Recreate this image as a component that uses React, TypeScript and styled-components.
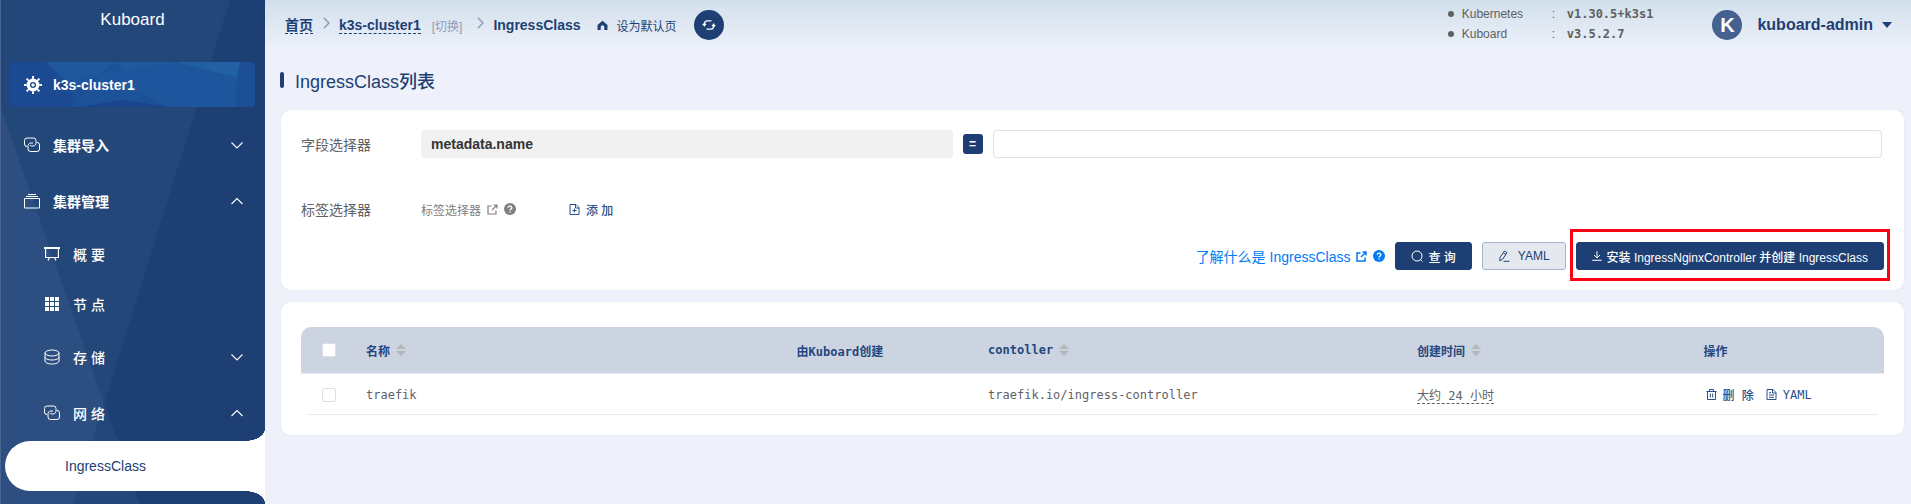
import React from "react";
import styled, { createGlobalStyle, css } from "styled-components";

const navy = "#1d3f74";
const mono = `"DejaVu Sans Mono", "Noto Sans CJK SC", monospace`;
const sans = `"Liberation Sans", "Noto Sans CJK SC", sans-serif`;

const GlobalStyle = createGlobalStyle`
  *, *::before, *::after { box-sizing: border-box; }
  body { margin: 0; background: #eef1fa; font-family: ${sans}; font-size: 14px; color: #606266; }
  button, input { font-family: inherit; }
  a { color: inherit; text-decoration: none; }
  svg { display: block; flex: none; }
`;

const Shell = styled.div`
  display: flex;
  min-height: 100vh;
`;

/* ---------- sidebar ---------- */

const Sidebar = styled.aside`
  flex: none;
  width: 265px;
  height: 100vh;
  overflow: hidden;
  position: relative;
  background: ${navy};
  color: #fff;
`;

const Facets = styled.svg`
  position: absolute;
  inset: 0;
`;

const SidebarBody = styled.div`
  position: relative;
`;

const Brand = styled.div`
  height: 62px;
  padding-top: 10px;
  text-align: center;
  font-size: 17px;
  line-height: 20px;
`;

const ClusterButton = styled.button`
  display: flex;
  align-items: center;
  gap: 11px;
  position: relative;
  overflow: hidden;
  width: 245px;
  height: 45px;
  margin: 0 10px 10px;
  padding: 0 14px;
  border: 0;
  border-radius: 5px;
  background: #1c4f94;
  color: #fff;
  font-size: 14px;
  font-weight: 700;
  & > span, & > svg:not(:first-child) { position: relative; }
`;

const Menu = styled.nav`
  display: flex;
  flex-direction: column;
`;

const menuText = css`
  display: flex;
  align-items: center;
  border: 0;
  background: none;
  color: #fff;
  font-size: 14px;
  text-align: left;
`;

const Group = styled.button<{ $sub?: boolean }>`
  ${menuText}
  height: 56px;
  gap: 13px;
  padding: 0 21px 0 ${(p) => (p.$sub ? 44 : 24)}px;
  font-weight: ${(p) => (p.$sub ? 500 : 700)};
  & > span { flex: 1; }
`;

const Item = styled.a`
  ${menuText}
  height: 50px;
  gap: 13px;
  padding-left: 44px;
  font-weight: 500;
`;

const Active = styled.a`
  display: flex;
  align-items: center;
  position: relative;
  height: 50px;
  margin-left: 5px;
  padding-left: 60px;
  border-radius: 25px 0 0 25px;
  background: #fff;
  color: ${navy};
  font-weight: 500;
  &::before, &::after {
    content: "";
    position: absolute;
    right: 0;
    width: 20px;
    height: 12px;
  }
  &::before {
    bottom: 100%;
    background: radial-gradient(ellipse 20px 12px at 0 0, transparent 98%, #fff 100%);
  }
  &::after {
    top: 100%;
    background: radial-gradient(ellipse 20px 12px at 0 100%, transparent 98%, #fff 100%);
  }
`;

/* ---------- top bar ---------- */

const Main = styled.main`
  flex: 1;
  min-width: 0;
  padding: 0 7px 0 16px;
  background: linear-gradient(#d2e0ec, #eef1fa 52px);
`;

const TopBar = styled.header`
  display: flex;
  justify-content: space-between;
  height: 50px;
  padding: 0 12px 0 4px;
  color: ${navy};
`;

const Crumbs = styled.nav`
  display: flex;
  align-items: center;
  font-weight: 700;
`;

const Crumb = styled.a`
  border-bottom: 1px dashed ${navy};
  line-height: 16px;
`;

const Switch = styled.a`
  margin: 0 5px 0 11px;
  color: #8d9cb9;
  font-size: 12px;
  font-weight: 400;
`;

const Arrow = styled.svg`
  margin: 0 9px 4px 10px;
  color: #8d9cb9;
`;

const DefaultPage = styled.button`
  display: flex;
  align-items: center;
  gap: 9px;
  margin: 0 17px 0 16px;
  padding: 0;
  border: 0;
  background: none;
  color: ${navy};
  font-size: 12px;
`;

const Refresh = styled.button`
  display: grid;
  place-items: center;
  width: 30px;
  height: 30px;
  padding: 0;
  border: 0;
  border-radius: 50%;
  background: ${navy};
  color: #fff;
`;

const TopRight = styled.div`
  display: flex;
  align-items: center;
`;

const Versions = styled.ul`
  align-self: flex-start;
  margin: 4px 59px 0 0;
  padding: 0;
  list-style: none;
  color: #606060;
  font-size: 12px;
`;

const Version = styled.li`
  display: grid;
  grid-template-columns: 14px 90px 15px auto;
  align-items: center;
  height: 20px;
  &::before {
    content: "";
    width: 6px;
    height: 6px;
    border-radius: 50%;
    background: #606060;
  }
  & > b { font-family: ${mono}; }
`;

const UserButton = styled.button`
  display: flex;
  align-items: center;
  padding: 0;
  border: 0;
  background: none;
  color: ${navy};
  font-size: 16px;
  font-weight: 700;
`;

const Avatar = styled.span`
  display: grid;
  place-items: center;
  width: 30px;
  height: 30px;
  margin-right: 15px;
  border-radius: 50%;
  background: #44618f;
  color: #fff;
  font-size: 20px;
`;

const Caret = styled.svg`
  margin-left: 9px;
`;

/* ---------- content ---------- */

const Title = styled.h1`
  display: flex;
  align-items: center;
  gap: 11px;
  height: 60px;
  margin: 0;
  color: ${navy};
  font-size: 18px;
  font-weight: 500;
  &::before {
    content: "";
    width: 4px;
    height: 16px;
    margin-left: -1px;
    border-radius: 2px;
    background: ${navy};
  }
`;

const Card = styled.section`
  margin-bottom: 12px;
  padding: 20px 20px;
  border-radius: 10px;
  background: #fff;
  box-shadow: 0 0 3px #e0e6f0;
`;

const FilterRow = styled.div`
  display: flex;
  align-items: center;
  height: 28px;
  padding: 0 2px 0 0;
  & + & { margin: 37px 0 19px; }
`;

const FieldLabel = styled.label`
  flex: none;
  width: 120px;
`;

const KeyInput = styled.input`
  flex: 512 1 0;
  min-width: 0;
  height: 28px;
  padding: 0 10px;
  border: 0;
  border-radius: 4px;
  background: #f1f1f1;
  color: #333;
  font-size: 14px;
  font-weight: 700;
  outline: none;
`;

const Equals = styled.button`
  width: 20px;
  height: 20px;
  margin: 0 10px;
  padding: 0;
  border: 0;
  border-radius: 3px;
  background: ${navy};
  color: #fff;
  font-size: 12px;
  font-weight: 700;
  line-height: 20px;
`;

const ValueInput = styled.input`
  flex: 868 1 0;
  min-width: 0;
  height: 28px;
  padding: 0 10px;
  border: 1px solid #dcdfe6;
  border-radius: 4px;
  background: #fff;
  font-size: 14px;
`;

const HelpLink = styled.a<{ $primary?: boolean }>`
  display: flex;
  align-items: center;
  gap: 6px;
  color: ${(p) => (p.$primary ? "#007af5" : "#808080")};
  font-size: ${(p) => (p.$primary ? 14 : 12)}px;
`;

const TextButton = styled.button`
  display: inline-flex;
  align-items: center;
  gap: 6px;
  padding: 0;
  border: 0;
  background: none;
  color: #2a4f87;
  font-size: 12px;
  font-weight: 500;
`;

const AddButton = styled(TextButton)`
  margin-left: 53px;
`;

const Actions = styled.div`
  display: flex;
  align-items: center;
  justify-content: flex-end;
  gap: 10px;
  height: 28px;
`;

const Button = styled.button<{ $plain?: boolean }>`
  display: flex;
  align-items: center;
  gap: ${(p) => (p.$plain ? 8 : 5)}px;
  height: 28px;
  padding: 0 15px;
  border: 1px solid ${(p) => (p.$plain ? "#a5b2c7" : navy)};
  border-radius: 3px;
  background: ${(p) => (p.$plain ? "#e4e8ef" : navy)};
  color: ${(p) => (p.$plain ? navy : "#fff")};
  font-size: 12px;
  font-weight: 500;
  white-space: nowrap;
`;

const Highlight = styled.div`
  position: relative;
  &::after {
    content: "";
    position: absolute;
    inset: -13px -6px -11px;
    border: 3px solid #fb0214;
    pointer-events: none;
  }
`;

const TableCard = styled(Card)`
  padding-top: 25px;
`;

const Table = styled.table`
  width: 100%;
  table-layout: fixed;
  border-collapse: separate;
  border-spacing: 0;
  font-family: ${mono};
  font-size: 12px;
`;

const Col = styled.col<{ $w: string }>`
  width: ${(p) => p.$w};
`;

const Th = styled.th`
  height: 47px;
  padding: 0 10px;
  border-bottom: 1px solid #e6e9f4;
  background: #ccd4e1;
  color: #25477f;
  text-align: left;
  font-weight: 700;
  &:first-child { border-radius: 10px 0 0 0; padding-left: 21px; }
  &:last-child { border-radius: 0 10px 0 0; }
`;

const Td = styled.td`
  height: 41px;
  padding: 0 10px;
  background: linear-gradient(#e6e9f4, #e6e9f4) left bottom / 100% 1px no-repeat;
  &:first-child { background-position: 6px bottom; padding-left: 21px; }
  &:last-child { background-position: -6px bottom; }
`;

const HeadCell = styled.span`
  display: flex;
  align-items: center;
  gap: 5px;
`;

const Check = styled.input`
  appearance: none;
  display: block;
  width: 14px;
  height: 14px;
  margin: 0;
  border: 1px solid #dcdfe6;
  border-radius: 2px;
  background: #fff;
`;

const Age = styled.span`
  border-bottom: 1px dashed #606266;
`;

const RowActions = styled.div`
  display: flex;
  gap: 12px;
  padding-left: 2px;
  & > button { font-family: ${mono}; }
`;

/* ---------- icons ---------- */

type IconProps = { size?: number; children: React.ReactNode; box?: number; stroke?: number };
const Icon = ({ size = 16, box = 16, stroke = 1, children }: IconProps) => (
  <svg width={size} height={size} viewBox={`0 0 ${box} ${box}`} fill="none" stroke="currentColor" strokeWidth={stroke} aria-hidden="true">
    {children}
  </svg>
);

const HelmIcon = () => (
  <Icon size={18} box={18}>
    <circle cx="9" cy="9" r="4.700" strokeWidth="3.400" />
    <circle cx="9" cy="9" r="1.200" fill="currentColor" />
    {[0, 45, 90, 135, 180, 225, 270, 315].map((a) => (
      <path key={a} d="M9 3.500V.5M8 .8h2" strokeWidth="1.600" transform={`rotate(${a} 9 9)`} />
    ))}
  </Icon>
);
const LinksIcon = () => (
  <Icon size={16}>
    <path d="M3.200 9.600H3A2.500 2.500 0 0 1 .5 7V3.500A2.500 2.500 0 0 1 3 1h6.500A2.500 2.500 0 0 1 12 3.500V5.500A3 3 0 0 1 9 9H7.500A1.500 1.500 0 0 1 6 8" />
    <path d="M12.800 5.400H13A2.500 2.500 0 0 1 15.500 8v4A2.500 2.500 0 0 1 13 14.500H6.500A2.500 2.500 0 0 1 4 12V9.500A3 3 0 0 1 7 6h2" />
  </Icon>
);
const StackIcon = () => (
  <Icon size={16}>
    <path d="M.5 5.500h15v9.500H.5zM2 3.500h12M4 1.500h8" />
  </Icon>
);
const BoardIcon = () => (
  <Icon size={16}>
    <path d="M0 2h16" strokeWidth="2" />
    <path d="M1.600 2v9.500h12.800V2M5.500 11.500 4 14.500M10.500 11.500l1.500 3" strokeWidth="1.200" />
  </Icon>
);
const GridIcon = () => (
  <Icon size={16}>
    {[1, 6, 11].map((x) => [1, 6, 11].map((y) => <rect key={`${x}-${y}`} x={x} y={y} width="4" height="4" fill="currentColor" stroke="none" />))}
  </Icon>
);
const DiskIcon = () => (
  <Icon size={16}>
    <ellipse cx="8" cy="4" rx="7" ry="3" />
    <path d="M1 4v8c0 1.700 3.100 3 7 3s7-1.300 7-3V4M1 8c0 1.700 3.100 3 7 3s7-1.300 7-3" />
  </Icon>
);
const Chevron = ({ up }: { up?: boolean }) => (
  <Icon size={14} box={14} stroke={1.1}>
    <path d={up ? "M1.500 10 7 4.500 12.500 10" : "M1.500 4.500 7 10l5.500-5.500"} />
  </Icon>
);
const CrumbArrow = () => (
  <Arrow width="7" height="12" viewBox="0 0 7 12" fill="none" stroke="currentColor" strokeWidth="1.500" aria-hidden="true">
    <path d="M.8.8 6 6 .8 11.200" />
  </Arrow>
);
const HomeIcon = () => (
  <Icon size={11} box={11}>
    <path d="M5.500.8 10.500 5v5H7.300V7a1.800 1.800 0 0 0-3.600 0v3H.5V5z" fill="currentColor" stroke="none" />
  </Icon>
);
const RefreshIcon = () => (
  <Icon size={14} box={14} stroke={1.3}>
    <path d="M2.400 8.500V5.800A3 3 0 0 1 5 2.800h4.500M.8 7 2.400 5.400 4 7M11.600 5.500v2.700A3 3 0 0 1 9 11.200H4.500M13.200 7l-1.600 1.600L10 7" />
  </Icon>
);
const ExternalIcon = ({ bold }: { bold?: boolean }) => (
  <Icon size={11} box={11} stroke={bold ? 1.5 : 1.2}>
    <path d="M4.500 2H1v8h8V6.500M6.500 1H10v3.500M10 1 5 6" />
  </Icon>
);
const HelpIcon = () => (
  <Icon size={12} box={12}>
    <circle cx="6" cy="6" r="6" fill="currentColor" stroke="none" />
    <path d="M4.200 4.800a1.800 1.600 0 1 1 2.700 1.300C6.300 6.500 6 6.700 6 7.300M6 8.300v1.300" stroke="#fff" strokeWidth="1.300" />
  </Icon>
);
const DocIcon = ({ plus }: { plus?: boolean }) => (
  <Icon size={11} box={11}>
    <path d="M1 .5h6l3 3v7H1zM6.500.5V4H10" />
    <path d={plus ? "M5.500 4.500v4M3.500 6.500h4" : "M3 6h5M3 8.300h5M3 3.700h2"} />
  </Icon>
);
const SearchIcon = () => (
  <Icon size={12} box={12}>
    <circle cx="6" cy="6" r="5" />
    <path d="m9.300 9.500 2 2" />
  </Icon>
);
const EditIcon = () => (
  <Icon size={12} box={12}>
    <path d="M2 7.500 6.500 1 9 2.700 4.600 9.200 1.800 10.800zM5.400 2.800 7.800 4.500M5.500 11.300h6" />
  </Icon>
);
const DownloadIcon = () => (
  <Icon size={10} box={10}>
    <path d="M5 .3v6.500M2 4 5 6.900 8 4M.3 9.300h9.400" />
  </Icon>
);
const TrashIcon = () => (
  <Icon size={11} box={11}>
    <path d="M.5 2.500h10M3.500 2.500v-2h4v2M1.500 2.500v8h8v-8M4.300 4.500v4M6.700 4.500v4" />
  </Icon>
);
const SortIcon = () => (
  <Icon size={12} box={12}>
    <path d="M1 5 6 0l5 5zM1 7l5 5 5-5z" fill="#b4b6ba" stroke="none" />
  </Icon>
);

/* ---------- page ---------- */

export default function App() {
  return (
    <>
      <GlobalStyle />
      <Shell>
        <Sidebar>
          <Facets width="265" height="504" viewBox="0 0 265 504" aria-hidden="true">
            <path d="M0 0H230L73 504H0z" fill="#24477a" />
            <path d="M0 105 139 504H0z" fill="#2c4e80" />
            <path d="M104 402 139 504H73z" fill="#24477a" />
            <path d="M.5 0v504" stroke="#4a6690" />
          </Facets>
          <SidebarBody>
            <Brand>Kuboard</Brand>
            <ClusterButton>
              <Facets width="245" height="45" viewBox="0 0 245 45" aria-hidden="true">
                <path d="M0 0h36L70 45H0z" fill="#1b4a93" />
                <path d="M36 0h70L66 28z" fill="#1f589d" />
                <path d="M106 0 60 45h60l14-12z" fill="#1c5299" />
                <path d="M106 0h60l-32 33z" fill="#1f5a9f" />
                <path d="M166 0h64l-3 16z" fill="#2060a3" />
                <path d="M166 0 61 16 134 33l26 12h66l1-29z" fill="#1d569d" />
                <path d="m230 0-3 16-1 29h19V0z" fill="#1d4f97" />
                <path d="m70 45 40-7 50 7z" fill="#1a458c" />
              </Facets>
              <HelmIcon />
              <span>k3s-cluster1</span>
            </ClusterButton>
            <Menu>
              <Group><LinksIcon /><span>集群导入</span><Chevron /></Group>
              <Group><StackIcon /><span>集群管理</span><Chevron up /></Group>
              <Item href="#overview"><BoardIcon />概 要</Item>
              <Item href="#nodes"><GridIcon />节 点</Item>
              <Group $sub><DiskIcon /><span>存 储</span><Chevron /></Group>
              <Group $sub><LinksIcon /><span>网 络</span><Chevron up /></Group>
              <Active href="#ingressclass">IngressClass</Active>
            </Menu>
          </SidebarBody>
        </Sidebar>

        <Main>
          <TopBar>
            <Crumbs>
              <Crumb href="#home">首页</Crumb>
              <CrumbArrow />
              <Crumb href="#cluster">k3s-cluster1</Crumb>
              <Switch href="#switch">[切换]</Switch>
              <CrumbArrow />
              <span>IngressClass</span>
              <DefaultPage><HomeIcon />设为默认页</DefaultPage>
              <Refresh aria-label="刷新"><RefreshIcon /></Refresh>
            </Crumbs>
            <TopRight>
              <Versions>
                <Version><span>Kubernetes</span><span>:</span><b>v1.30.5+k3s1</b></Version>
                <Version><span>Kuboard</span><span>:</span><b>v3.5.2.7</b></Version>
              </Versions>
              <UserButton>
                <Avatar>K</Avatar>
                kuboard-admin
                <Caret width="10" height="6" viewBox="0 0 10 6" aria-hidden="true">
                  <path d="M0 0h10L5 6z" fill="currentColor" />
                </Caret>
              </UserButton>
            </TopRight>
          </TopBar>

          <Title>IngressClass列表</Title>

          <Card>
            <FilterRow>
              <FieldLabel htmlFor="field-key">字段选择器</FieldLabel>
              <KeyInput id="field-key" value="metadata.name" readOnly />
              <Equals>=</Equals>
              <ValueInput aria-label="metadata.name" />
            </FilterRow>
            <FilterRow>
              <FieldLabel as="span">标签选择器</FieldLabel>
              <HelpLink href="#labels">标签选择器<ExternalIcon /><HelpIcon /></HelpLink>
              <AddButton><DocIcon plus />添 加</AddButton>
            </FilterRow>
            <Actions>
              <HelpLink href="#about" $primary>了解什么是 IngressClass<ExternalIcon bold /><HelpIcon /></HelpLink>
              <Button><SearchIcon />查 询</Button>
              <Button $plain><EditIcon />YAML</Button>
              <Highlight>
                <Button><DownloadIcon />安装 IngressNginxController 并创建 IngressClass</Button>
              </Highlight>
            </Actions>
          </Card>

          <TableCard>
            <Table>
              <colgroup>
                <Col $w="55px" />
                <Col $w="27.2%" />
                <Col $w="12.1%" />
                <Col $w="27.1%" />
                <Col $w="18.1%" />
                <Col $w="auto" />
              </colgroup>
              <thead>
                <tr>
                  <Th><Check type="checkbox" aria-label="全选" /></Th>
                  <Th><HeadCell>名称<SortIcon /></HeadCell></Th>
                  <Th>由Kuboard创建</Th>
                  <Th><HeadCell>contoller<SortIcon /></HeadCell></Th>
                  <Th><HeadCell>创建时间<SortIcon /></HeadCell></Th>
                  <Th>操作</Th>
                </tr>
              </thead>
              <tbody>
                <tr>
                  <Td><Check type="checkbox" aria-label="traefik" /></Td>
                  <Td>traefik</Td>
                  <Td />
                  <Td>traefik.io/ingress-controller</Td>
                  <Td><Age>大约 24 小时</Age></Td>
                  <Td>
                    <RowActions>
                      <TextButton><TrashIcon />删 除</TextButton>
                      <TextButton><DocIcon />YAML</TextButton>
                    </RowActions>
                  </Td>
                </tr>
              </tbody>
            </Table>
          </TableCard>
        </Main>
      </Shell>
    </>
  );
}
